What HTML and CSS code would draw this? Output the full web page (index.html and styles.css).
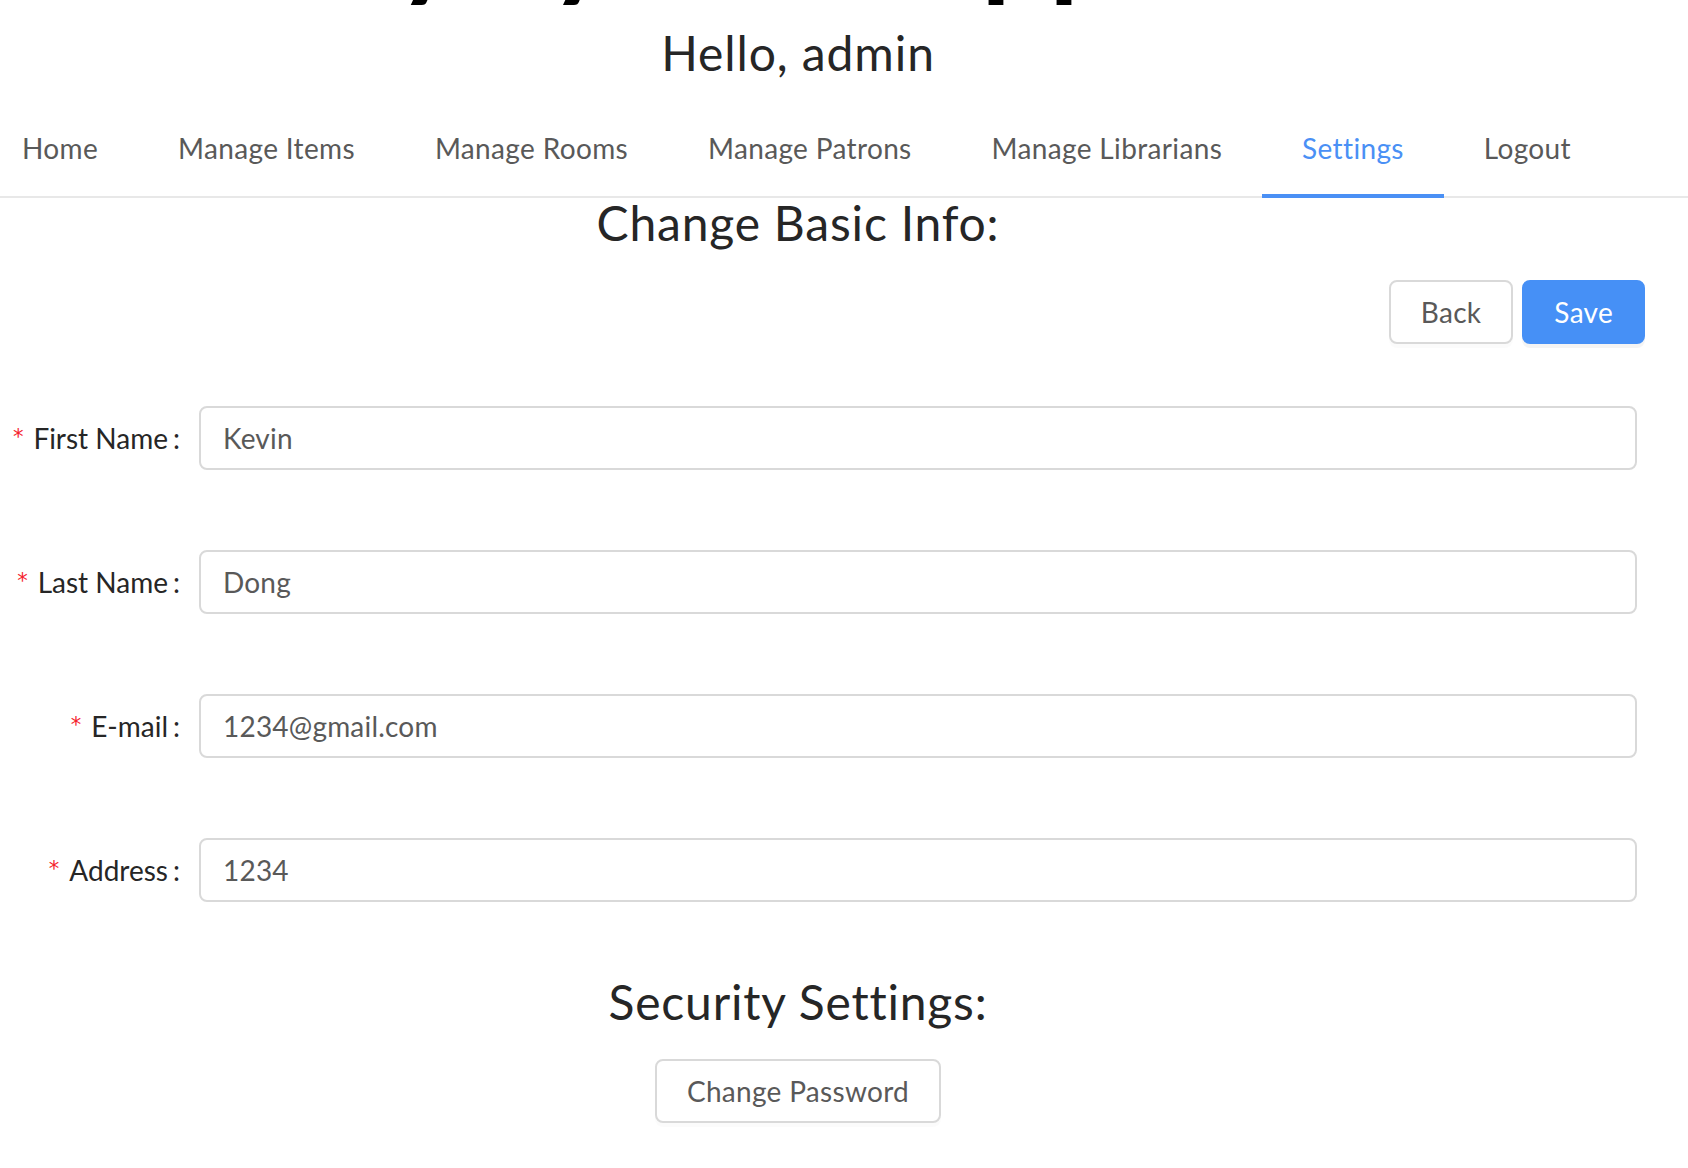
FILE: index.html
```html
<!DOCTYPE html>
<html lang="en">
<head>
<meta charset="utf-8">
<title>Settings</title>
<link rel="stylesheet" href="styles.css">
</head>
<body>
<h1 class="app-title">Library System Application</h1>
<h3 class="greeting">Hello, admin</h3>
<nav class="menu">
  <a class="menu-item first">Home</a>
  <a class="menu-item">Manage Items</a>
  <a class="menu-item">Manage Rooms</a>
  <a class="menu-item">Manage Patrons</a>
  <a class="menu-item">Manage Librarians</a>
  <a class="menu-item active">Settings</a>
  <a class="menu-item">Logout</a>
</nav>
<main class="content">
  <h3 class="section-title">Change Basic Info:</h3>
  <div class="actions">
    <button class="btn" type="button">Back</button>
    <button class="btn btn-primary" type="button">Save</button>
  </div>
  <form class="form">
    <label class="form-label"><span class="req">*</span>First Name</label>
    <input class="input" type="text" value="Kevin">
    <label class="form-label"><span class="req">*</span>Last Name</label>
    <input class="input" type="text" value="Dong">
    <label class="form-label"><span class="req">*</span>E-mail</label>
    <input class="input" type="text" value="1234@gmail.com">
    <label class="form-label"><span class="req">*</span>Address</label>
    <input class="input" type="text" value="1234">
  </form>
  <h3 class="section-title security">Security Settings:</h3>
  <div class="center-row">
    <button class="btn" type="button">Change Password</button>
  </div>
</main>
</body>
</html>
```
FILE: styles.css
```css
html, body {
  margin: 0;
  padding: 0;
  background: #fff;
}
body {
  font-family: Lato, "Open Sans", sans-serif;
  color: #262626;
  overflow: hidden;
  width: 1688px;
  height: 1168px;
}
.app-title {
  margin: -121px 0 0;
  width: 1596px;
  text-align: center;
  font-size: 120px;
  line-height: 120px;
  font-weight: 700;
  color: #000;
}
.greeting {
  margin: 22px 0 0;
  width: 1596px;
  text-align: center;
  font-size: 48px;
  line-height: 64px;
  font-weight: 400;
  letter-spacing: 0.9px;
  color: #262626;
}
.menu {
  margin-top: 17px;
  display: flex;
  border-bottom: 2px solid #e8e8e8;
}
.menu-item {
  padding: 0 40px;
  line-height: 92px;
  font-size: 28px;
  letter-spacing: 0.35px;
  color: #595959;
  border-bottom: 4px solid transparent;
  margin-bottom: -2px;
  white-space: nowrap;
  cursor: pointer;
}
.menu-item.first {
  padding-left: 22px;
}
.menu-item.active {
  color: #4a90f5;
  border-bottom-color: #4a90f5;
}
.section-title {
  width: 1596px;
  margin: 1px 0 0;
  text-align: center;
  font-size: 48px;
  line-height: 48px;
  font-weight: 400;
  letter-spacing: 0.8px;
  color: #262626;
}
.actions {
  display: flex;
  justify-content: flex-end;
  gap: 9px;
  padding-right: 43px;
  margin-top: 33px;
}
.btn {
  height: 64px;
  padding: 0 30px;
  font-family: inherit;
  font-size: 28px;
  letter-spacing: 0.3px;
  color: #595959;
  background: #fff;
  border: 2px solid #d9d9d9;
  border-radius: 8px;
  box-shadow: 0 4px 0 rgba(0, 0, 0, 0.015);
  cursor: pointer;
}
.btn-primary {
  color: #fff;
  background: #4690f6;
  border-color: #4690f6;
  box-shadow: 0 4px 0 rgba(0, 0, 0, 0.045);
}
.form {
  margin: 62px 0 0;
  display: grid;
  grid-template-columns: 199px 1438px;
  row-gap: 80px;
  align-items: center;
}
.form-label {
  text-align: right;
  padding-right: 19px;
  font-size: 28px;
  color: #262626;
  white-space: nowrap;
}
.form-label::after {
  content: ":";
  margin-left: 5px;
}
.req {
  color: #f5222d;
  font-size: 21px;
  margin-right: 10px;
  font-family: "DejaVu Sans", sans-serif;
  position: relative;
  top: -5px;
}
.input {
  box-sizing: border-box;
  height: 64px;
  width: 100%;
  margin: 0;
  padding: 0 22px;
  font-family: inherit;
  font-size: 28px;
  letter-spacing: 0.2px;
  color: #595959;
  border: 2px solid #d9d9d9;
  border-radius: 8px;
  background: #fff;
  outline: none;
}
.security {
  margin-top: 76px;
}
.center-row {
  width: 1596px;
  text-align: center;
  margin-top: 33px;
}
```
